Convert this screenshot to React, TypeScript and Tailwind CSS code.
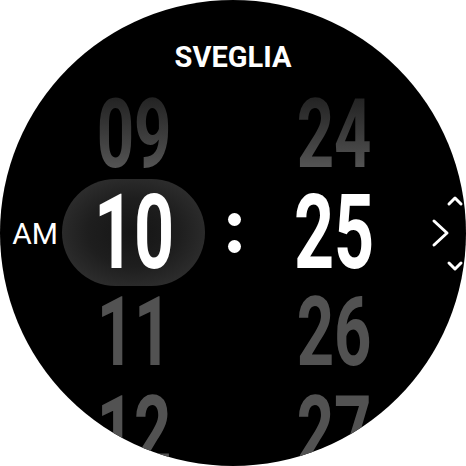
const hours = [
  { v: '09', fade: true },
  { v: '10', sel: true },
  { v: '11' },
  { v: '12' },
];
const minutes = [
  { v: '24', fade: true },
  { v: '25', sel: true },
  { v: '26' },
  { v: '27' },
];

type Cell = { v: string; sel?: boolean; fade?: boolean };

const Digits = ({ cell }: { cell: Cell }) => {
  if (cell.sel) {
    return (
      <span className="inline-block scale-x-[0.68] text-[103px] font-bold leading-[0.8] text-white">{cell.v}</span>
    );
  }
  return (
    <span
      className={
        cell.fade
          ? 'inline-block scale-x-[0.68] bg-gradient-to-b from-[#222] to-[#575757] bg-clip-text text-[96px] font-bold leading-[0.8] text-transparent'
          : 'inline-block scale-x-[0.68] text-[96px] font-bold leading-[0.8] text-[#525252]'
      }
    >
      {cell.v}
    </span>
  );
};

const Column = ({ cells, pill }: { cells: Cell[]; pill?: boolean }) => (
  <div className="flex w-[144px] flex-col">
    {cells.map((c) => (
      <div key={c.v} className="relative flex h-[99px] items-center justify-center">
        {pill && c.sel && (
          <div className="absolute left-0 top-[-5px] h-[107px] w-[143px] rounded-full bg-[radial-gradient(ellipse_at_center,#151515_0%,#1e1e1e_45%,#383838_100%)]" />
        )}
        <div className="relative">
          <Digits cell={c} />
        </div>
      </div>
    ))}
  </div>
);

export default function App() {
  return (
    <div className="h-[466px] w-[466px] bg-white" style={{ fontFamily: 'Roboto, "Liberation Sans", sans-serif' }}>
      <div className="relative flex h-[466px] w-[466px] flex-col items-center overflow-hidden rounded-full bg-black">
        <div className="pt-[43px] text-[29px] font-bold leading-none text-white">SVEGLIA</div>
        <div className="mt-[13px] flex w-full">
          <div className="flex w-[62px] flex-col">
            <div className="h-[99px]" />
            <div className="flex h-[99px] items-center justify-end pr-[4px] text-[30px] leading-none text-white">AM</div>
          </div>
          <Column cells={hours} pill />
          <div className="flex w-[56px] flex-col">
            <div className="h-[99px]" />
            <div className="flex h-[99px] flex-col items-center justify-center gap-[14px] pb-[2px]">
              <div className="h-[13px] w-[13px] rounded-full bg-white" />
              <div className="h-[13px] w-[13px] rounded-full bg-white" />
            </div>
          </div>
          <Column cells={minutes} />
        </div>
        <svg className="absolute left-[428px] top-[193px]" width="38" height="82" viewBox="0 0 38 82">
          <path d="M21 11 L27 5 L33 11" fill="none" stroke="white" strokeWidth="3" strokeLinecap="round" strokeLinejoin="round" />
          <path d="M6 28 L19 40 L6 52" fill="none" stroke="white" strokeWidth="3" strokeLinecap="round" strokeLinejoin="round" />
          <path d="M21 70 L27 76 L33 70" fill="none" stroke="white" strokeWidth="3" strokeLinecap="round" strokeLinejoin="round" />
        </svg>
      </div>
    </div>
  );
}
